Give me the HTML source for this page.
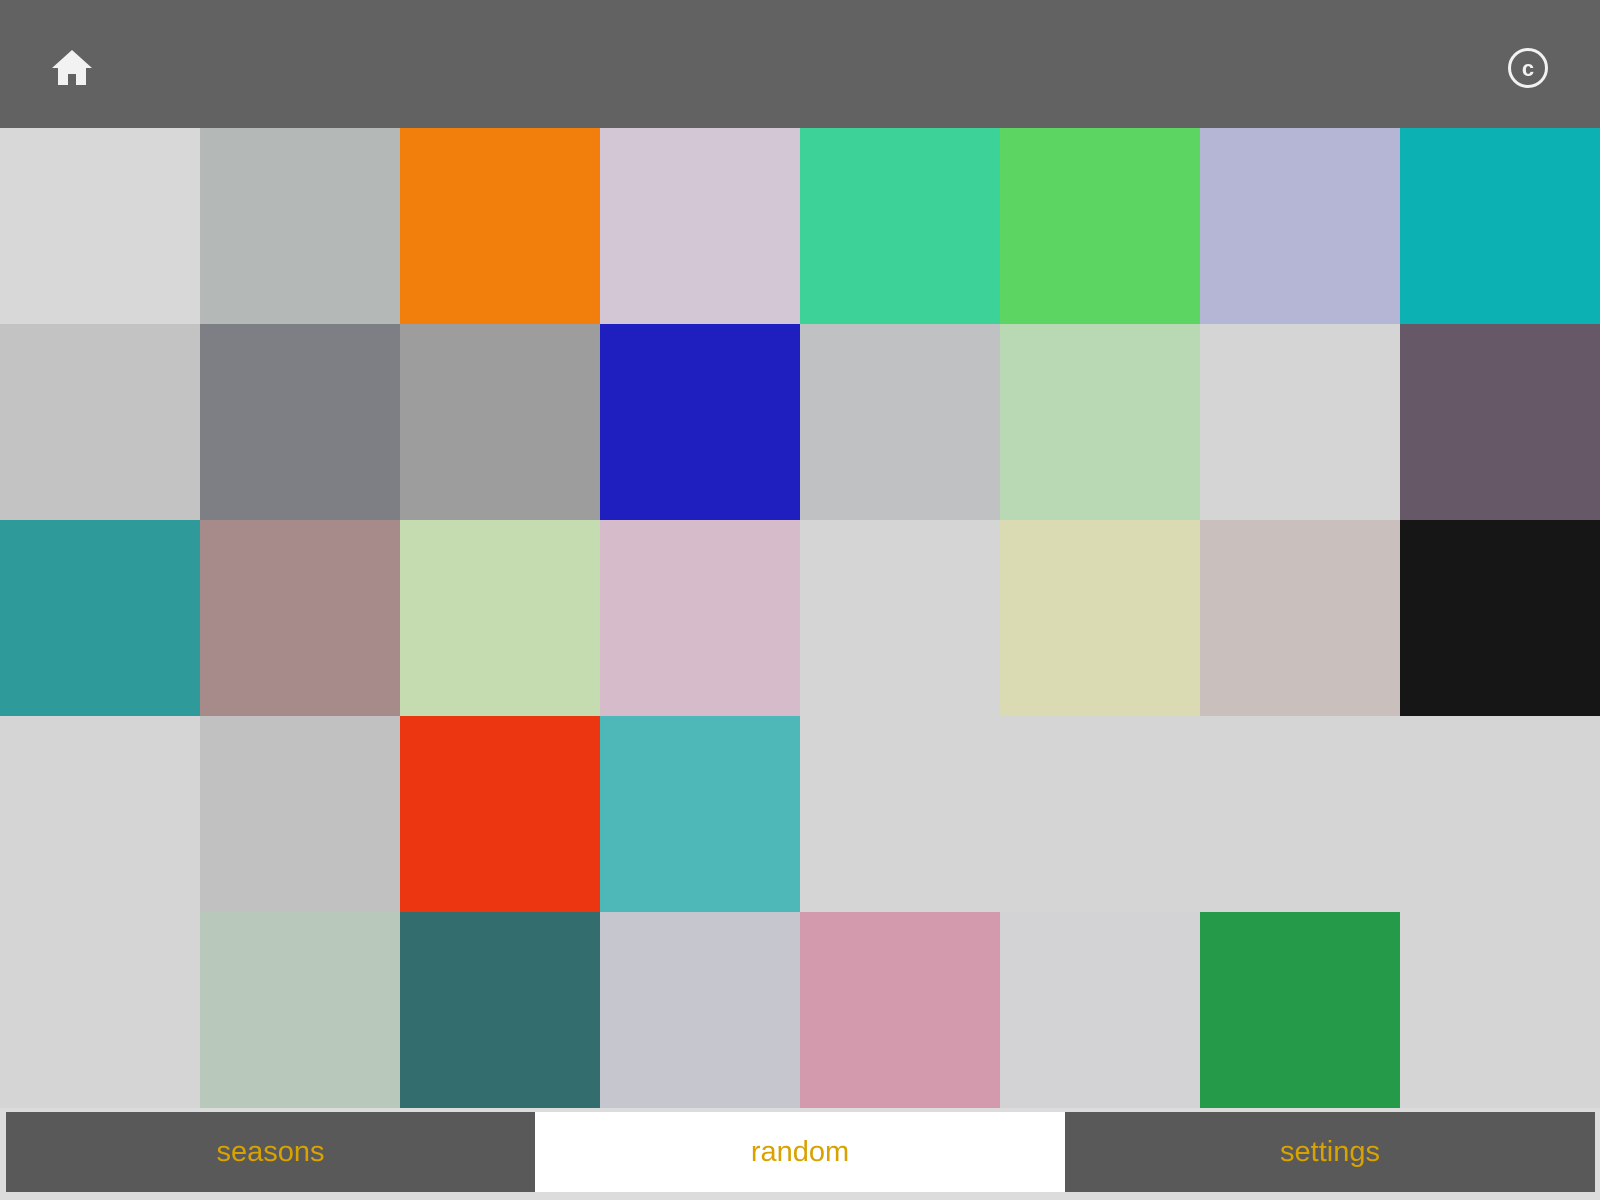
<!DOCTYPE html>
<html><head><meta charset="utf-8"><style>
*{margin:0;padding:0;box-sizing:border-box}
body{width:1600px;height:1200px;background:#dcdcdc;position:relative;overflow:hidden;font-family:"Liberation Sans",sans-serif}
.hdr{position:absolute;left:0;top:0;width:1600px;height:128px;background:#626262}
.grid{position:absolute;left:0;top:128px;width:1600px;display:grid;grid-template-columns:repeat(8,200px);grid-auto-rows:196px}
.bar{position:absolute;top:1112px;height:80px;display:flex;align-items:center;justify-content:center;font-size:29px;color:#d8a200}
</style></head><body>
<div class="hdr">
<svg style="position:absolute;left:52px;top:49px" width="40" height="36" viewBox="0 0 40 36"><path d="M20 1 L40 19 L34 19 L34 36 L24 36 L24 25 L16 25 L16 36 L6 36 L6 19 L0 19 Z" fill="#f2f2f2"/></svg>
<svg style="position:absolute;left:1506px;top:46px" width="44" height="44" viewBox="0 0 44 44"><circle cx="22" cy="22" r="18.5" fill="none" stroke="#f2f2f2" stroke-width="3"/><text x="22" y="30" text-anchor="middle" font-family="Liberation Sans" font-weight="bold" font-size="22" fill="#f2f2f2">c</text></svg>
</div>
<div class="grid">
<div style="background:#d8d8d8"></div><div style="background:#b4b9b8"></div><div style="background:#f27e0c"></div><div style="background:#d3c7d6"></div><div style="background:#3dd398"></div><div style="background:#5dd562"></div><div style="background:#b5b5d6"></div><div style="background:#0cb1b3"></div>
<div style="background:#c3c3c3"></div><div style="background:#7e7f84"></div><div style="background:#9d9d9d"></div><div style="background:#1f1fbf"></div><div style="background:#c0c1c3"></div><div style="background:#b9d8b4"></div><div style="background:#d5d5d5"></div><div style="background:#675867"></div>
<div style="background:#2e9b9a"></div><div style="background:#a78b8b"></div><div style="background:#c4dcb0"></div><div style="background:#d6bccb"></div><div style="background:#d5d5d5"></div><div style="background:#dadbb2"></div><div style="background:#c9c0bd"></div><div style="background:#161616"></div>
<div style="background:#d5d5d5"></div><div style="background:#c1c1c1"></div><div style="background:#ec3612"></div><div style="background:#4eb8b9"></div><div style="background:#d5d5d5"></div><div style="background:#d5d5d5"></div><div style="background:#d5d5d5"></div><div style="background:#d5d5d5"></div>
<div style="background:#d5d5d5"></div><div style="background:#b8c9bc"></div><div style="background:#336d6d"></div><div style="background:#c6c6cf"></div><div style="background:#d39aad"></div><div style="background:#d3d3d5"></div><div style="background:#259b49"></div><div style="background:#d5d5d5"></div>
</div>
<div class="bar" style="left:6px;width:529px;background:#595959">seasons</div>
<div class="bar" style="left:535px;width:530px;background:#fff">random</div>
<div class="bar" style="left:1065px;width:530px;background:#595959">settings</div>
</body></html>
